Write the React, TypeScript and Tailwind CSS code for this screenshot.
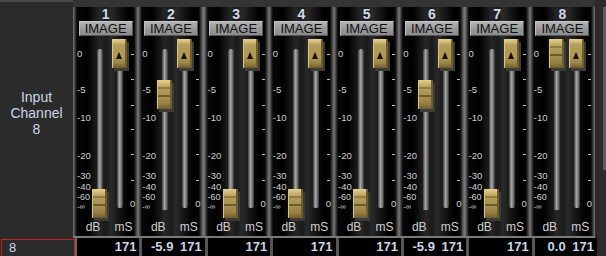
const channels = [
  { n: 1, pos: "bottom", db: "" },
  { n: 2, pos: "mid", db: "-5.9" },
  { n: 3, pos: "bottom", db: "" },
  { n: 4, pos: "bottom", db: "" },
  { n: 5, pos: "bottom", db: "" },
  { n: 6, pos: "mid", db: "-5.9" },
  { n: 7, pos: "bottom", db: "" },
  { n: 8, pos: "top", db: "0.0" },
];

const knobTop: Record<string, string> = {
  top: "top-[3px]",
  mid: "top-[44px]",
  bottom: "top-[153px]",
};

const scale = [
  { t: "0", cls: "top-[14px] text-[9.5px]" },
  { t: "-5", cls: "top-[50px] text-[9.5px]" },
  { t: "-10", cls: "top-[78px] text-[9.5px]" },
  { t: "-20", cls: "top-[116px] text-[9.5px]" },
  { t: "-30", cls: "top-[136px] text-[9.5px]" },
  { t: "-40", cls: "top-[147px] text-[9.5px]" },
  { t: "-60", cls: "top-[157px] text-[9px]" },
  { t: "-∞", cls: "top-[167px] text-[7.5px]" },
];

const ticks = ["top-[18px]", "top-[43px]", "top-[69px]", "top-[93px]", "top-[118px]", "top-[144px]"];

const Knob = ({ pos, arrow }: { pos: string; arrow?: boolean }) => (
  <div className={`absolute h-[29px] w-[15px] ${pos}`}>
    <div className="absolute left-[2px] top-[3px] h-[29px] w-[15px] bg-[#3c3b36]" />
    <div
      className={`relative h-full w-full shadow-[inset_-2px_0_0_#6e5d30,inset_1px_0_0_#d8c688] ${
        arrow
          ? "bg-[linear-gradient(180deg,#e4d190_0px,#d2bb78_3px,#b49c5a_6px,#b09852_18px,#9c8544_24px,#6d5c2e_29px)]"
          : "bg-[linear-gradient(180deg,#e4d190_0px,#d2bb78_3px,#bba360_7px,#6a5830_8px,#b49c58_9px,#a99150_15px,#2e2614_16px,#a78f4e_17px,#957e40_24px,#6d5c2e_29px)]"
      }`}
    >
      {arrow && (
        <div className="absolute left-[4px] top-[13px] h-0 w-0 border-x-[3.5px] border-b-[7px] border-x-transparent border-b-[#151108]" />
      )}
    </div>
  </div>
);

const Strip = ({ n, pos }: { n: number; pos: string }) => (
  <div className="relative flex flex-col items-center bg-[linear-gradient(90deg,#7a7a7a_0px,#3c3c3c_2px,#070707_4px,#000_14px,#151515_21px,#262626_27px,#1a1a1a_33px,#2a2a2a_38px,#181818_45px,#000_55px,#050505_61px,#3c3c3c_63px,#777_65px)]">
    <div className="h-[14px] text-[14px] leading-[15px] font-bold text-[#cfdbea]">{n}</div>
    <div className="h-[15px] w-[54px] border border-t-[#c8c8c8] border-l-[#bdbdbd] border-r-[#5a5a5a] border-b-[#555] bg-[linear-gradient(180deg,#b4b4b4,#9a9a9a_50%,#8c8c8c)] text-center text-[13px] leading-[13px] text-[#111]">
      IMAGE
    </div>
    <div className="relative h-[183px] w-full">
      {scale.map((s) => (
        <div key={s.t} className={`absolute left-[4px] leading-[8px] text-[#cfcfcf] ${s.cls}`}>
          {s.t}
        </div>
      ))}
      {ticks.map((c) => (
        <div key={c} className={`absolute left-[58px] h-px w-[3px] bg-[#bdbdbd] ${c}`} />
      ))}
      <div className="absolute left-[57px] top-[164px] text-[9.5px] leading-[8px] text-[#cfcfcf]">0</div>
      <div className="absolute left-[24px] top-[13px] h-[161px] w-[6px] rounded-t-full rounded-b-[2px] bg-[linear-gradient(90deg,#3a3a3a,#a6a6a6_40%,#7a7a7a_70%,#2c2c2c)]" />
      <div className="absolute left-[44px] top-[3px] h-[169px] w-[6px] rounded-b-[2px] bg-[linear-gradient(90deg,#3a3a3a,#a6a6a6_40%,#7a7a7a_70%,#2c2c2c)]" />
      <div className="absolute left-[19px] top-0 h-full w-[15px]">
        <Knob pos={knobTop[pos]} />
      </div>
      <div className="absolute left-[39px] top-0 h-full w-[15px]">
        <Knob pos="top-[3px]" arrow />
      </div>
    </div>
    <div className="flex w-full text-[12px] leading-[16px] text-[#cfcfcf]">
      <div className="w-[40px] text-center">dB</div>
      <div className="w-[21px] text-center">mS</div>
    </div>
  </div>
);

export default function App() {
  return (
    <div className="flex h-[256px] w-[606px] flex-col overflow-hidden bg-[#2b2b2b] font-['Liberation_Sans',Arial,sans-serif]">
      <div className="flex h-[238px]">
        <div className="flex w-[73px] flex-col">
          <div className="h-[2px] bg-[#4a4a4a]" />
          <div className="pt-[87px] text-center text-[14px] leading-[16px] text-[#c9d6e6]">
            Input
            <br />
            Channel
            <br />8
          </div>
        </div>
        <div className="flex w-[522px] flex-col">
          <div className="h-[7px] bg-[#343434]" />
          <div className="grid flex-1 grid-cols-8">
            {channels.map((c) => (
              <Strip key={c.n} n={c.n} pos={c.pos} />
            ))}
          </div>
          <div className="h-[2px] bg-[#7a7a7a]" />
        </div>
        <div className="flex w-[11px] justify-end pt-[7px]">
          <div className="h-[163px] w-[3px] bg-[#5e5e5e]" />
        </div>
      </div>
      <div className="flex h-[18px]">
        <div className="ml-px mt-px h-[18px] w-[74px] border border-[#c4201c] pl-[7px] text-[13px] leading-[16px] text-[#c9d6e6]">
          8
        </div>
        <div className="w-[2px] bg-[#6a6a6a]" />
        <div className="grid w-[520px] grid-cols-8 gap-[3px] bg-[#555]">
          {channels.map((c) => (
            <div key={c.n} className="flex bg-black text-[13px] font-bold leading-[18px] text-[#c9d6e6]">
              <div className="w-[31px] text-right">{c.db}</div>
              <div className="flex-1 pr-[3px] text-right">171</div>
            </div>
          ))}
        </div>
      </div>
    </div>
  );
}
